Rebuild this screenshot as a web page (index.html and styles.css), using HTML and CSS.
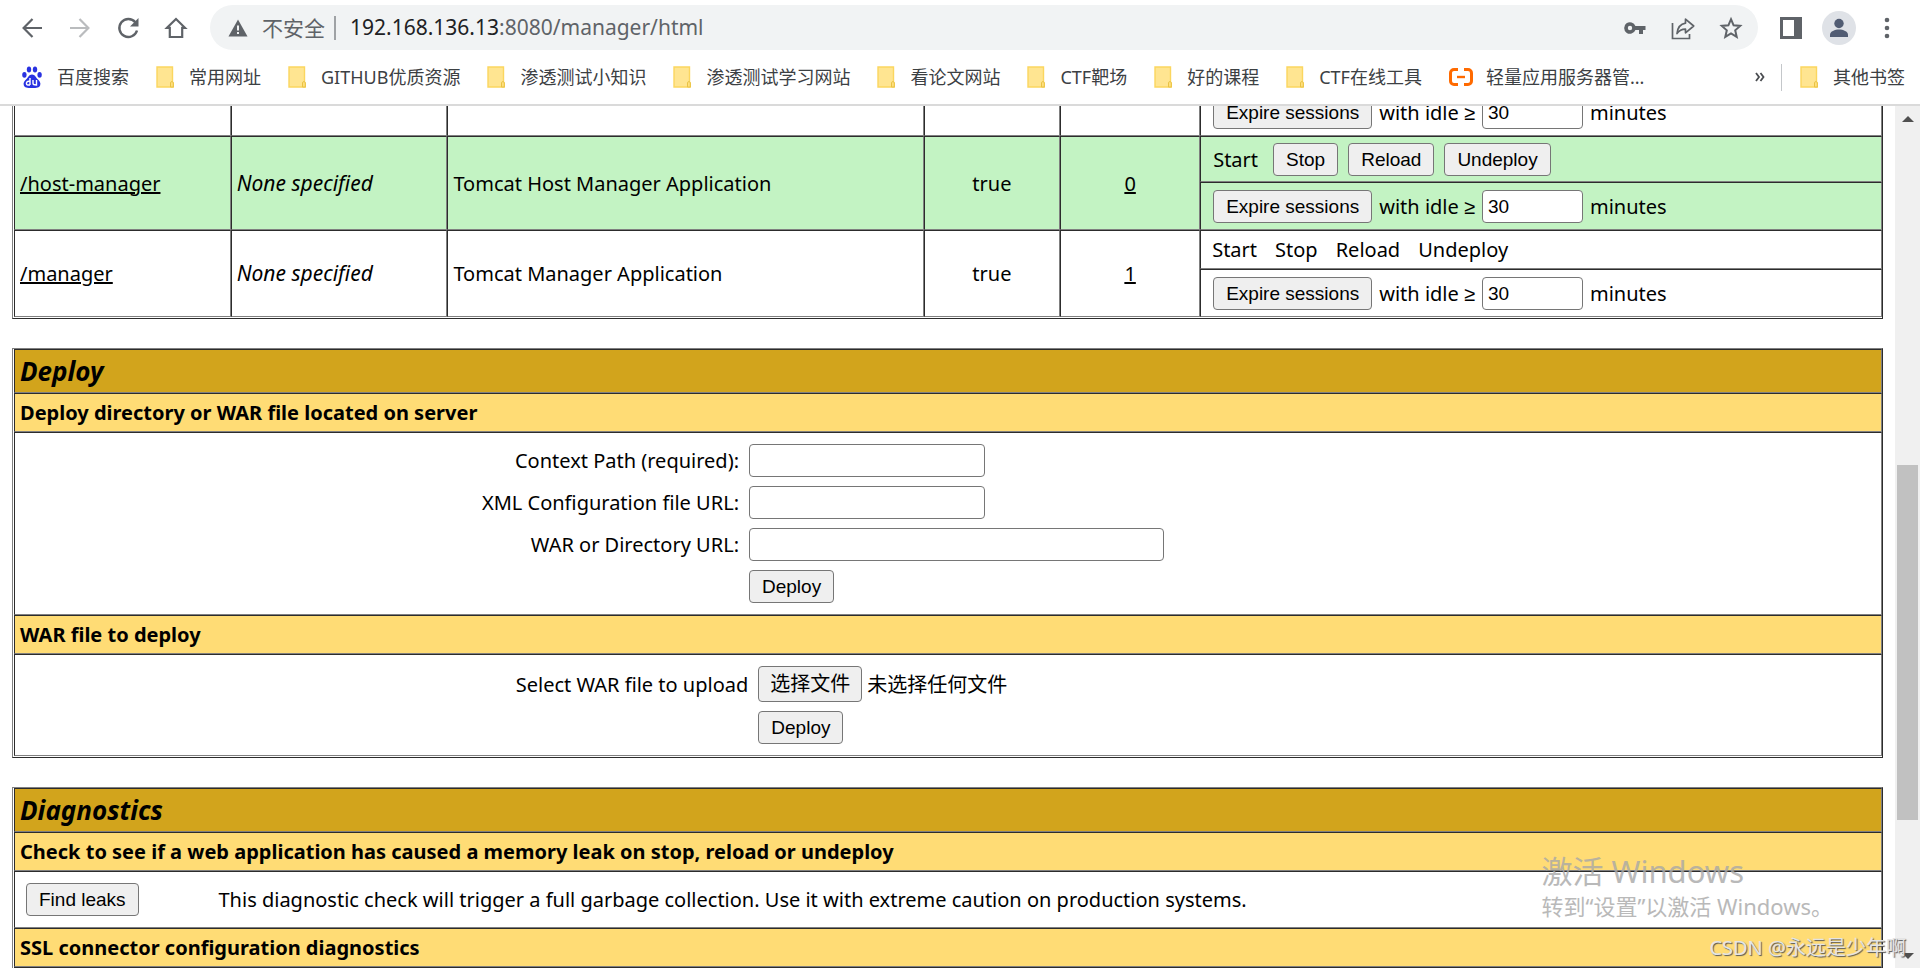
FILE: index.html
```
<!DOCTYPE html>
<html lang="zh-CN">
<head>
<meta charset="utf-8">
<title>/manager</title>
<link rel="stylesheet" href="styles.css">
</head>
<body>
<svg class="defs" width="0" height="0" aria-hidden="true">
  <symbol id="folder" viewBox="0 0 18 22">
    <path d="M1 1h15.5v15.5l1 .8v3.7H1z" fill="#ffe591" stroke="#fbd65f" stroke-width="1.4"/>
    <path d="M14.5 21v-4.2c0-1.6 2.8-1.6 2.8 0V21z" fill="#ffe07e" stroke="#e9c244" stroke-width="1"/>
  </symbol>
</svg>

<header class="browser">
  <div class="toolbar">
    <button class="tool" aria-label="后退"><svg width="24" height="24" viewBox="0 0 24 24" fill="none" stroke="#5f6368" stroke-width="2.2"><path d="M22 12H4M12.5 3L3.6 12l8.9 9"/></svg></button>
    <button class="tool" aria-label="前进"><svg width="24" height="24" viewBox="0 0 24 24" fill="none" stroke="#babcbe" stroke-width="2.2"><path d="M2 12h18M11.500 3l8.900 9-8.900 9"/></svg></button>
    <button class="tool" aria-label="重新加载"><svg width="24" height="24" viewBox="0 0 24 24" fill="none" stroke="#5f6368" stroke-width="2.4"><path d="M19.300 6.200A9 9 0 1 0 21 14.500"/><path d="M22.500 2v8.500H14z" fill="#5f6368" stroke="none"/></svg></button>
    <button class="tool" aria-label="主页"><svg width="24" height="24" viewBox="0 0 24 24" fill="none" stroke="#5f6368" stroke-width="2.200"><path d="M3 11.800L12 3l9 8.800h-2.800V21H5.800v-9.200z"/></svg></button>
    <div class="omnibox">
      <svg class="warning" width="20" height="20" viewBox="0 0 20 20"><path d="M10 1.500L19.500 18.500H.5z" fill="#5f6368"/><path d="M9 7.500h2v5H9zM9 14h2v2H9z" fill="#f1f3f4"/></svg>
      <span class="insecure">不安全</span>
      <span class="url" role="textbox" aria-label="地址栏"><b>192.168.136.13</b>:8080/manager/html</span>
      <button class="tool" aria-label="密码"><svg width="24" height="24" viewBox="0 0 24 24" fill="#5f6368"><path fill-rule="evenodd" d="M12.400 10A5.800 5.800 0 1 0 12.400 14H16v4h4v-4h2.500v-4zM7 14.200a2.200 2.200 0 1 1 0-4.400 2.200 2.200 0 0 1 0 4.400z"/></svg></button>
      <button class="tool" aria-label="分享"><svg width="26" height="26" viewBox="0 0 26 26" fill="none" stroke="#5f6368" stroke-width="1.700"><path d="M2.500 8v15.500h17V19"/><path d="M15.500 4.200l8.200 6.800-8.200 6.800v-3.600c-4 0-6.500 1.400-8.500 4.300.6-5.500 3.500-9.500 8.500-10.300z" stroke-linejoin="round"/></svg></button>
      <button class="tool" aria-label="加入书签"><svg width="24" height="24" viewBox="0 0 24 24" fill="none" stroke="#5f6368" stroke-width="2"><path d="M12 3.200l2.600 6.100 6.600.6-5 4.400 1.500 6.500-5.700-3.500-5.700 3.500 1.500-6.500-5-4.400 6.600-.6z"/></svg></button>
    </div>
    <button class="tool" aria-label="侧边栏"><svg width="22" height="22" viewBox="0 0 22 22"><path fill="#5f6368" fill-rule="evenodd" d="M0 0h22v22H0zM3 3v16h11V3z"/></svg></button>
    <button class="tool" aria-label="个人资料"><svg width="34" height="34" viewBox="0 0 34 34"><circle cx="17" cy="17" r="17" fill="#dfe2e7"/><circle cx="17" cy="12.500" r="4.700" fill="#515c73"/><path d="M8 26v-2.500c0-3 5-5 9-5s9 2 9 5V26z" fill="#515c73"/></svg></button>
    <button class="tool" aria-label="更多"><svg width="6" height="22" viewBox="0 0 6 22" fill="#5f6368"><circle cx="3" cy="3" r="2.300"/><circle cx="3" cy="11" r="2.300"/><circle cx="3" cy="19" r="2.300"/></svg></button>
  </div>
  <nav class="bookmarks">
    <a href="#"><svg width="20" height="22" viewBox="0 0 20 22" fill="#2932e1"><ellipse cx="7" cy="3.500" rx="2.200" ry="3"/><ellipse cx="13" cy="3.500" rx="2.200" ry="3"/><ellipse cx="2.400" cy="8.800" rx="2.200" ry="2.900"/><ellipse cx="17.600" cy="8.800" rx="2.200" ry="2.900"/><path d="M10 8.500c3 0 4 3 5.500 4.600 2.200 2 3.500 3.800 2.700 6.200-.8 2.500-3.200 2.700-8.200 2.700s-7.400-.2-8.200-2.700c-.8-2.400.5-4.200 2.700-6.200C6 11.500 7 8.500 10 8.500z"/><path d="M8 12v7M8 15.500c-4-1.200-4.600 3.500-2 3.500h2M11 14v3.500c0 1.500 1 1.500 3.500 1.500v-5" fill="none" stroke="#fff" stroke-width="1.400"/></svg>百度搜索</a>
    <a href="#"><svg width="18" height="22"><use href="#folder"/></svg>常用网址</a>
    <a href="#"><svg width="18" height="22"><use href="#folder"/></svg>GITHUB优质资源</a>
    <a href="#"><svg width="18" height="22"><use href="#folder"/></svg>渗透测试小知识</a>
    <a href="#"><svg width="18" height="22"><use href="#folder"/></svg>渗透测试学习网站</a>
    <a href="#"><svg width="18" height="22"><use href="#folder"/></svg>看论文网站</a>
    <a href="#"><svg width="18" height="22"><use href="#folder"/></svg>CTF靶场</a>
    <a href="#"><svg width="18" height="22"><use href="#folder"/></svg>好的课程</a>
    <a href="#"><svg width="18" height="22"><use href="#folder"/></svg>CTF在线工具</a>
    <a href="#" class="cloud"><svg width="24" height="18" viewBox="0 0 24 18" fill="none" stroke="#ff6a00" stroke-width="3"><path d="M9 1.500H5A3.500 3.500 0 0 0 1.500 5v8A3.500 3.500 0 0 0 5 16.500h4M15 1.500h4A3.500 3.500 0 0 1 22.500 5v8a3.500 3.500 0 0 1-3.500 3.500h-4"/><path d="M8 9h8" stroke-width="2.400"/></svg>轻量应用服务器管...</a>
    <button class="more" aria-label="更多书签"><svg width="10" height="10" viewBox="0 0 10 10" fill="none" stroke="#4a4d51" stroke-width="1.800"><path d="M1 1l3 4-3 4M5.500 1l3 4-3 4"/></svg></button>
    <a href="#" class="others"><svg width="18" height="22"><use href="#folder"/></svg>其他书签</a>
  </nav>
</header>

<div class="viewport">
  <main class="page">
    <table class="panel apps">
      <colgroup><col class="c-path"><col class="c-version"><col class="c-name"><col class="c-running"><col class="c-sessions"><col></colgroup>
      <tr>
        <td></td><td></td><td></td><td></td><td></td>
        <td class="expire"><form class="line"><button type="button" class="btn">Expire sessions</button><label for="idle1">with idle <span class="sign">≥</span></label><input id="idle1" class="field idle" value="30"><span>minutes</span></form></td>
      </tr>
      <tr class="alt">
        <td rowspan="2"><a href="#">/host-manager</a></td>
        <td rowspan="2"><i>None specified</i></td>
        <td rowspan="2">Tomcat Host Manager Application</td>
        <td rowspan="2" class="center">true</td>
        <td rowspan="2" class="center"><a href="#">0</a></td>
        <td class="commands"><div class="line wide"><span class="start">Start</span><button class="btn">Stop</button><button class="btn">Reload</button><button class="btn">Undeploy</button></div></td>
      </tr>
      <tr class="alt">
        <td class="expire"><form class="line"><button type="button" class="btn">Expire sessions</button><label for="idle2">with idle <span class="sign">≥</span></label><input id="idle2" class="field idle" value="30"><span>minutes</span></form></td>
      </tr>
      <tr>
        <td rowspan="2"><a href="#">/manager</a></td>
        <td rowspan="2"><i>None specified</i></td>
        <td rowspan="2">Tomcat Manager Application</td>
        <td rowspan="2" class="center">true</td>
        <td rowspan="2" class="center"><a href="#">1</a></td>
        <td class="inactive"><div class="line words"><span>Start</span><span>Stop</span><span>Reload</span><span>Undeploy</span></div></td>
      </tr>
      <tr>
        <td class="expire"><form class="line"><button type="button" class="btn">Expire sessions</button><label for="idle3">with idle <span class="sign">≥</span></label><input id="idle3" class="field idle" value="30"><span>minutes</span></form></td>
      </tr>
    </table>

    <table class="panel">
      <tr><th class="title">Deploy</th></tr>
      <tr><th class="section">Deploy directory or WAR file located on server</th></tr>
      <tr><td class="body">
        <form class="form">
          <label for="path">Context Path (required):</label><input id="path" class="field">
          <label for="config">XML Configuration file URL:</label><input id="config" class="field">
          <label for="war">WAR or Directory URL:</label><input id="war" class="field long">
          <button type="button" class="btn submit">Deploy</button>
        </form>
      </td></tr>
      <tr><th class="section">WAR file to deploy</th></tr>
      <tr><td class="body">
        <form class="form upload">
          <span class="caption">Select WAR file to upload</span>
          <div class="file"><input type="file" id="file" class="file-input" aria-label="Select WAR file to upload"><label for="file" class="btn choose">选择文件</label><span>未选择任何文件</span></div>
          <button type="button" class="btn submit">Deploy</button>
        </form>
      </td></tr>
    </table>

    <table class="panel">
      <tr><th class="title">Diagnostics</th></tr>
      <tr><th class="section">Check to see if a web application has caused a memory leak on stop, reload or undeploy</th></tr>
      <tr><td class="body">
        <div class="diagnostic"><div><button class="btn">Find leaks</button></div><span>This diagnostic check will trigger a full garbage collection. Use it with extreme caution on production systems.</span></div>
      </td></tr>
      <tr><th class="section">SSL connector configuration diagnostics</th></tr>
      <tr><td class="body"></td></tr>
    </table>
  </main>
  <div class="scrollbar" aria-hidden="true">
    <svg width="12" height="6" viewBox="0 0 12 6"><path d="M0 6l6-6 6 6z" fill="#505050"/></svg>
    <div class="thumb"></div>
    <svg class="down" width="12" height="6" viewBox="0 0 12 6"><path d="M0 0l6 6 6-6z" fill="#505050"/></svg>
  </div>
</div>

<div class="activate"><p class="big">激活 Windows</p><p>转到“设置”以激活 Windows。</p></div>
<div class="credit">CSDN @永远是少年啊</div>
</body>
</html>
```

FILE: styles.css
```
* { box-sizing: border-box; }

body {
  margin: 0;
  height: 100vh;
  display: flex;
  flex-direction: column;
  overflow: hidden;
  background: #fff;
  color: #000;
  font: 20px/27px "Noto Sans", "Noto Sans CJK SC", sans-serif;
}

button, input { font: inherit; color: inherit; }
.defs { position: absolute; }

/* Browser chrome */
.browser {
  flex: none;
  border-bottom: 2px solid #dadada;
}
.toolbar {
  display: flex;
  align-items: center;
  padding: 5px 9px 5px 8px;
}
.tool {
  flex: none;
  width: 48px;
  height: 45px;
  display: flex;
  align-items: center;
  justify-content: center;
  padding: 0;
  border: 0;
  background: none;
}
.omnibox {
  flex: 1;
  height: 45px;
  display: flex;
  align-items: center;
  margin: 0 9px 0 10px;
  padding: 0 3px 0 18px;
  border-radius: 23px;
  background: #f1f3f4;
  color: #5f6368;
  font-size: 21px;
}
.insecure {
  margin-left: 14px;
  padding-right: 9px;
  border-right: 2px solid #9fa2a5;
  line-height: 24px;
}
.url { flex: 1; margin-left: 14px; }
.url b { font-weight: normal; color: #202124; }

.bookmarks {
  display: flex;
  align-items: center;
  gap: 27px;
  height: 49px;
  padding: 0 15px 5px 22px;
  font-size: 18px;
  color: #3c4043;
}
.bookmarks a {
  display: flex;
  align-items: center;
  gap: 15px;
  color: inherit;
  text-decoration: none;
  white-space: nowrap;
}
.bookmarks .cloud { gap: 13px; }
.more {
  display: flex;
  margin-left: auto;
  padding: 0;
  border: 0;
  background: none;
}
.bookmarks .others {
  margin-left: -11px;
  padding-left: 18px;
  border-left: 1px solid #c4c7ca;
}

/* Page area */
.viewport {
  flex: 1;
  min-height: 0;
  display: flex;
  overflow: hidden;
}
.page {
  flex: 1;
  margin-top: -19px;
  padding: 0 12px;
}

.panel {
  width: 100%;
  margin-bottom: 29px;
  padding: 0 0 1px 1px;
  border: 1px solid;
  border-color: #808080 #2c2c2c #2c2c2c #808080;
  border-spacing: 0;
}
.panel td, .panel th {
  padding: 5px;
  border: 1px solid;
  border-color: #2c2c2c #808080 #808080 #2c2c2c;
  text-align: left;
}
.panel a { color: #000; }
.panel i { font-size: 21px; }
.panel .center { text-align: center; }
.panel .title {
  padding: 4px 5px;
  background: #d2a41c;
  font-size: 26px;
  font-style: italic;
  line-height: 34px;
}
.panel .section { background: #ffdc75; }
.panel .body { padding: 11px 0; }

.apps { table-layout: fixed; }
.c-path, .c-version { width: 11.6%; }
.c-name { width: 25.5%; }
.c-running { width: 7.3%; }
.c-sessions { width: 7.5%; }
.alt td { background: #c3f3c3; }
.panel .expire { padding: 7px 12px 6px; }
.panel .commands { padding: 6px 12px 5px; }
.panel .inactive { padding: 5px 11px; }

.line {
  display: flex;
  align-items: center;
  gap: 7px;
  margin: 0;
}
.wide { gap: 10px; }
.start { margin-right: 5px; }
.words { gap: 18px; }
.sign { font-family: "Liberation Sans", sans-serif; }

.btn {
  height: 33px;
  padding: 0 12px;
  border: 1px solid #767676;
  border-radius: 4px;
  background: #efefef;
  font-family: "Liberation Sans", "Noto Sans CJK SC", sans-serif;
  font-size: 19px;
  line-height: 27px;
  white-space: nowrap;
}
.field {
  width: 236px;
  height: 33px;
  padding: 0 5px;
  border: 1px solid #767676;
  border-radius: 4px;
  background: #fff;
  font-family: "Liberation Sans", sans-serif;
  font-size: 19px;
}
.long { width: 415px; }
.idle { width: 101px; }

.form {
  display: grid;
  grid-template-columns: 38.8% 1fr;
  gap: 9px 10px;
  align-items: center;
  justify-items: start;
  margin: 0;
}
.form > label, .caption { justify-self: end; }
.submit { grid-column: 2; }
.upload { grid-template-columns: 39.3% 1fr; }

.file {
  display: flex;
  align-items: center;
  gap: 5px;
}
.file-input {
  position: absolute;
  width: 1px;
  height: 1px;
  opacity: 0;
}
.choose {
  height: 36px;
  padding: 0 11px;
  font-size: 20px;
  line-height: 34px;
}

.diagnostic {
  display: grid;
  grid-template-columns: 10% 1fr;
  align-items: center;
  padding-left: 11px;
}
.diagnostic span { padding-left: 7px; }

.scrollbar {
  flex: none;
  width: 25px;
  display: grid;
  grid-template-rows: 25px 334fr 355fr 123fr 25px;
  place-items: center;
  background: #f0f0f0;
}
.thumb {
  grid-row: 3;
  width: 21px;
  height: 100%;
  background: #c1c1c1;
}
.down { grid-row: 5; }

/* Overlays */
.activate {
  position: absolute;
  right: 87px;
  bottom: 47px;
  color: #a8a8a8;
  opacity: 0.8;
  font-size: 22px;
  line-height: 30px;
}
.activate p { margin: 0; }
.activate .big { font-size: 31px; line-height: 40px; }
.credit {
  position: absolute;
  right: 14px;
  bottom: 7px;
  color: #e4e4e4;
  text-shadow: 1px 1px 1px #555;
}
```
